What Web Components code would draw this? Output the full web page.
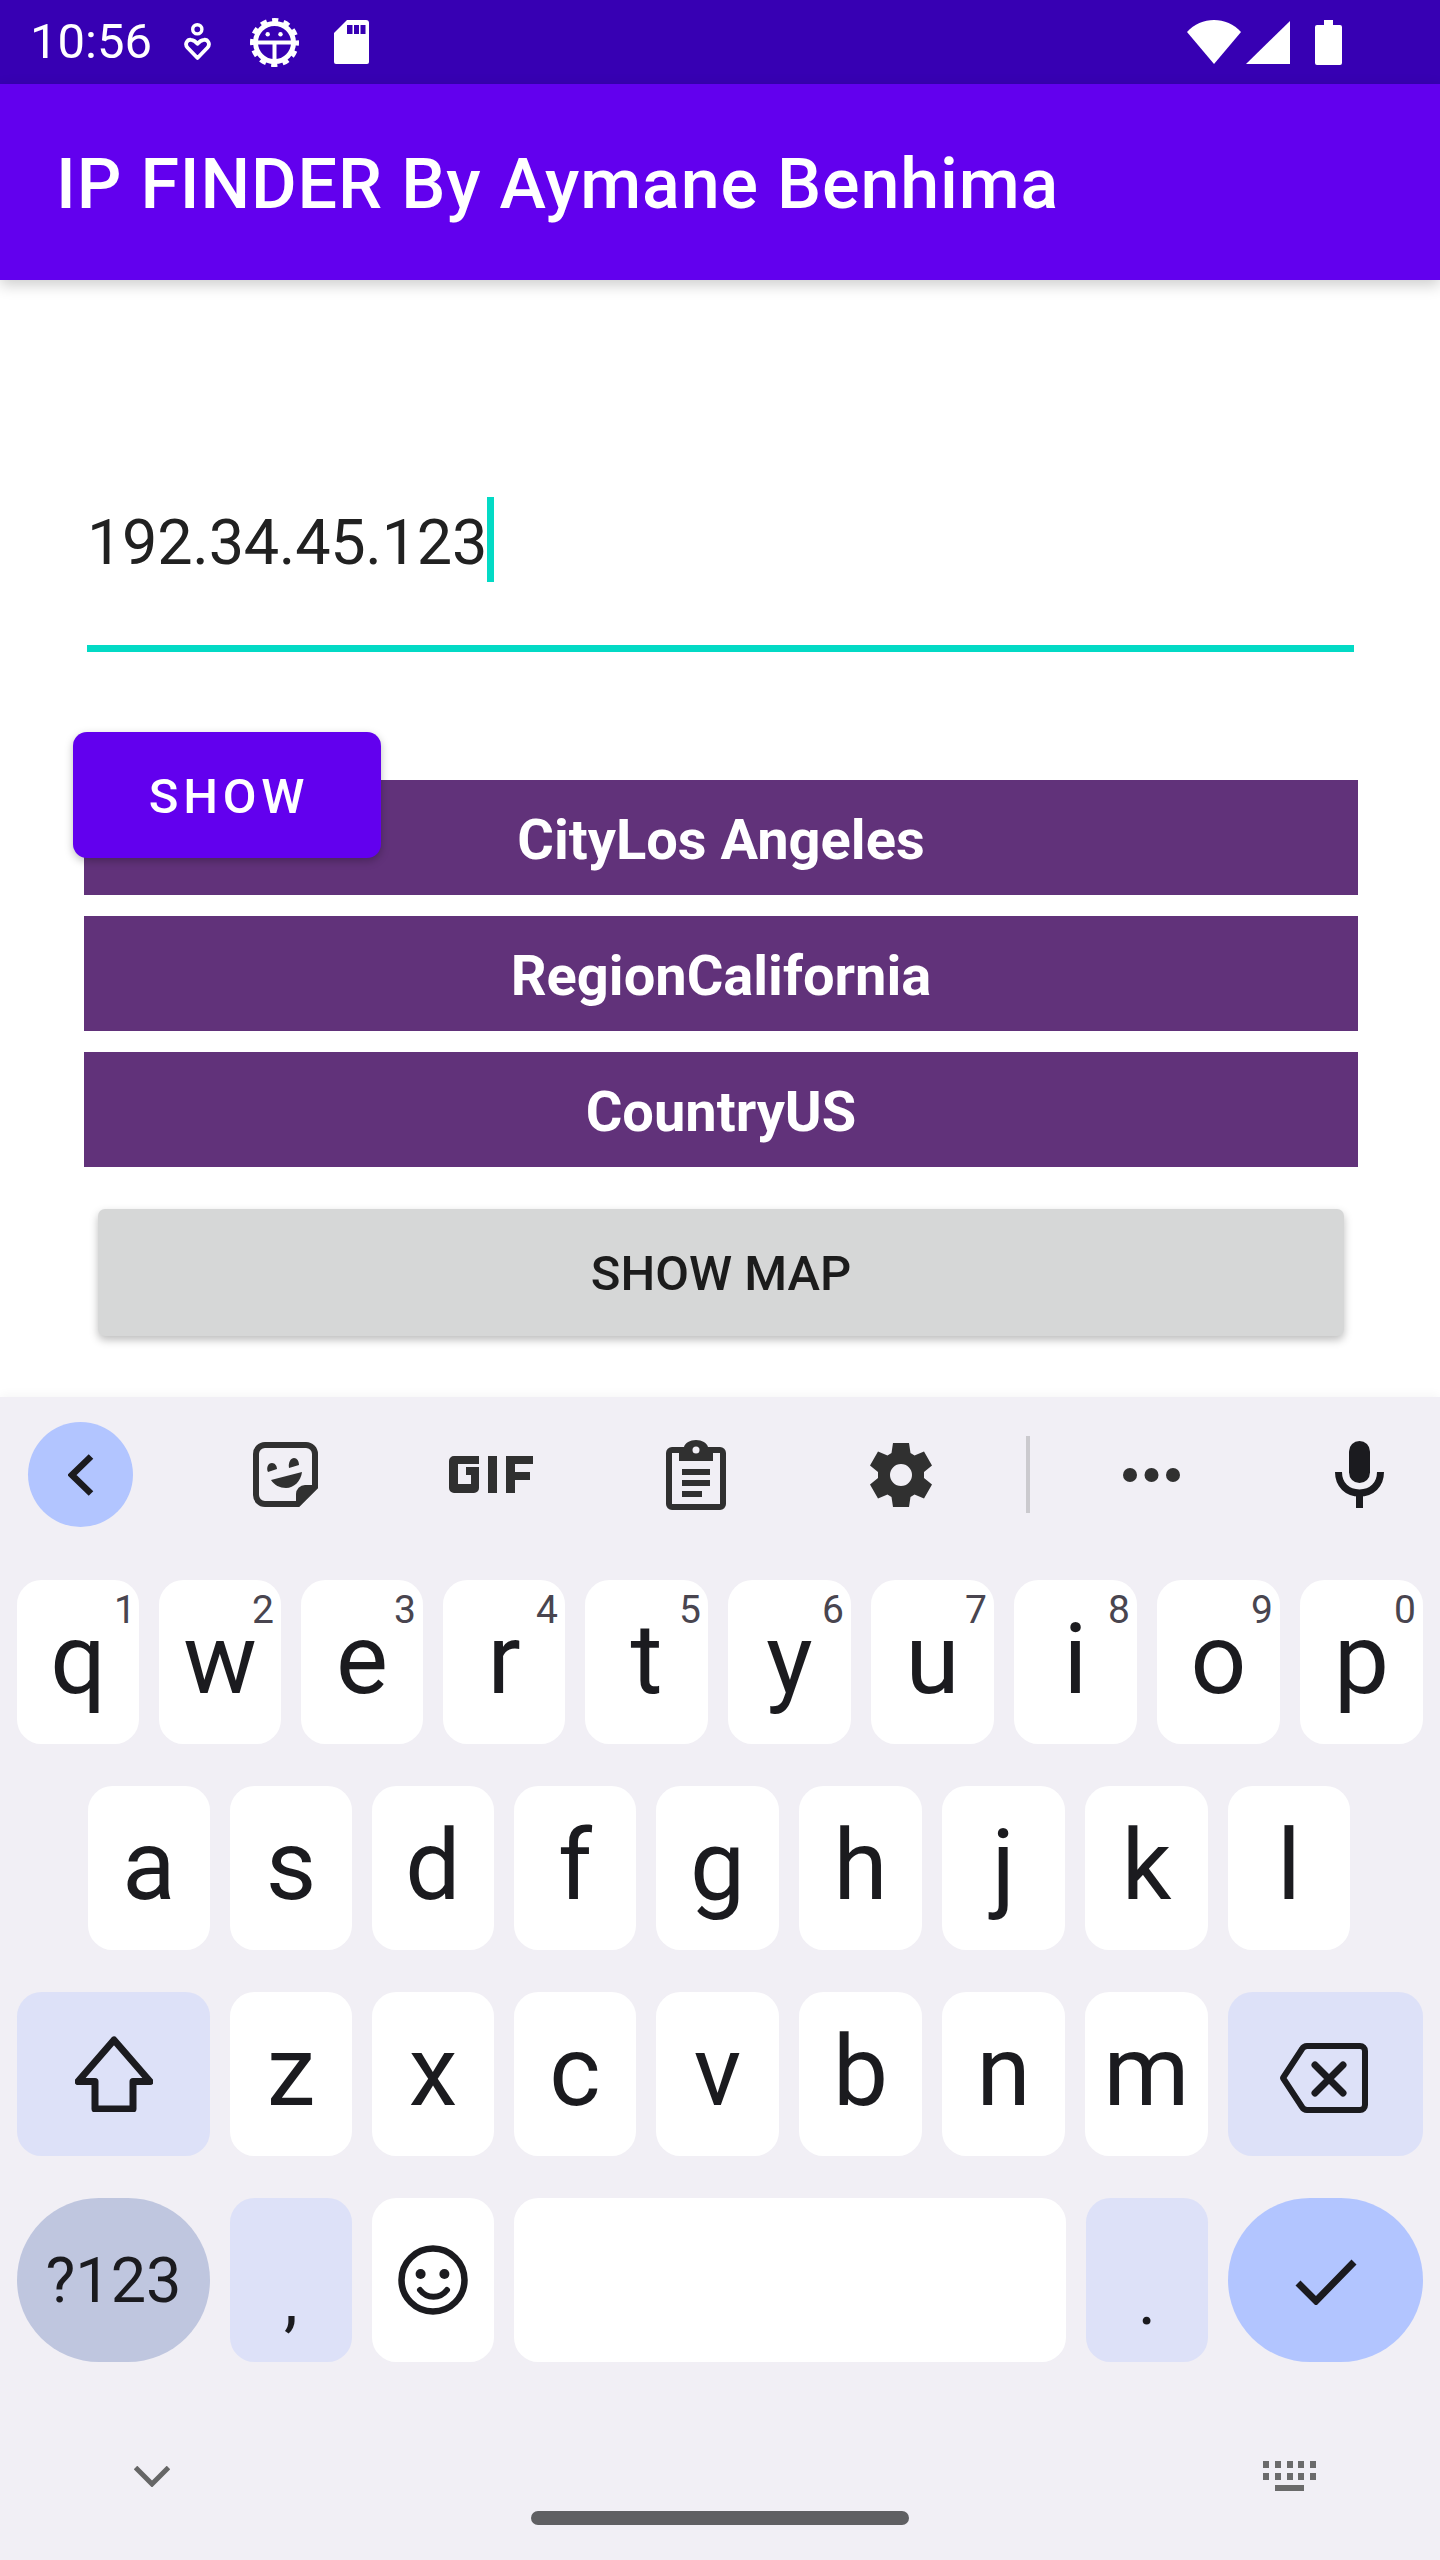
<!DOCTYPE html>
<html>
<head>
<meta charset="utf-8">
<title>IP FINDER</title>
<style>
  html, body { margin: 0; padding: 0; background: #fff; }
  body { width: 1440px; height: 2560px; overflow: hidden; font-family: Roboto, "Liberation Sans", sans-serif; display: flex; flex-direction: column; }
</style>
</head>
<body>
<status-bar time="10:56"></status-bar>
<app-bar>IP FINDER By Aymane Benhima</app-bar>
<finder-screen>
  <ip-field value="192.34.45.123"></ip-field>
  <show-button>SHOW</show-button>
  <info-row>CityLos Angeles</info-row>
  <info-row>RegionCalifornia</info-row>
  <info-row>CountryUS</info-row>
  <map-button>SHOW MAP</map-button>
</finder-screen>
<soft-keyboard></soft-keyboard>

<script>
class StatusBar extends HTMLElement {
  constructor() {
    super();
    this.attachShadow({ mode: "open" });
    this.shadowRoot.innerHTML = `
      <style>
        :host { display: flex; align-items: center; height: 84px; flex: none; background: #3700b3; color: #fff; padding: 0 98px 0 30px; box-sizing: border-box; }
        .time { font-size: 49px; line-height: 84px; width: 154px; }
        svg { display: block; fill: #fff; }
        .right { margin-left: auto; display: flex; align-items: center; }
      </style>
      <span class="time">${this.getAttribute("time")}</span>
      <svg width="27" height="38" viewBox="0 0 27 38" style="margin-right:39px"><g fill="none" stroke="#fff"><circle cx="13.300" cy="6.300" r="4.600" stroke-width="3.400"/><path d="M13.500 35 3.600 24.800c-3.500-4-.2-8.500 3.600-8 2.500.2 4.500 1.800 6.300 4 1.800-2.200 3.800-3.800 6.300-4 3.800-.5 7.100 4 3.600 8z" stroke-width="3.800" stroke-linejoin="round"/></g></svg>
      <svg width="49" height="49" viewBox="0 0 49 49" style="margin-right:35px"><g fill="none" stroke="#fff"><circle cx="24.500" cy="24.500" r="19" stroke-width="5"/><circle cx="24.500" cy="24.500" r="22" stroke-width="5" stroke-dasharray="6.200 5.320" stroke-dashoffset="3.100"/></g><path d="M7 22.500h35v4H26.500v16h-4v-16H7z"/><circle cx="17.700" cy="16.300" r="2.200"/><circle cx="30.500" cy="16.300" r="2.200"/></svg>
      <svg width="35" height="44" viewBox="0 0 35 44"><path d="M13 0h19a3 3 0 0 1 3 3v39a2 2 0 0 1-2 2H2a2 2 0 0 1-2-2V13z"/><path d="M13 5h5.500v9H13zM20 5h5v9h-5zM26.500 5h5v9h-5z" fill="#3700b3"/></svg>
      <div class="right">
        <svg width="54" height="44" viewBox="0 0 54 44"><path d="M0 12C7 4 17 0 27 0s20 4 27 12L27 44z"/></svg>
        <svg width="44" height="43" viewBox="0 0 44 43" style="margin-left:5px"><path d="M44 0v43H0z"/></svg>
        <svg width="27" height="45" viewBox="0 0 27 45" style="margin-left:25px"><path d="M9 0h9v5h7a2 2 0 0 1 2 2v36a2 2 0 0 1-2 2H2a2 2 0 0 1-2-2V7a2 2 0 0 1 2-2h7z"/></svg>
      </div>
    `;
  }
}

class AppBar extends HTMLElement {
  constructor() {
    super();
    this.attachShadow({ mode: "open" });
    this.shadowRoot.innerHTML = `
      <style>
        :host { display: flex; align-items: center; flex: none; position: relative; z-index: 2; height: 196px; padding: 4px 0 0 56px; box-sizing: border-box; background: #6200ee; color: #fff; font-size: 70px; font-weight: 500; letter-spacing: .85px; box-shadow: 0 5px 14px rgba(0,0,0,.2); }
      </style>
      <slot></slot>
    `;
  }
}

class FinderScreen extends HTMLElement {
  constructor() {
    super();
    this.attachShadow({ mode: "open" });
    this.shadowRoot.innerHTML = `
      <style>
        :host { display: flex; flex-direction: column; flex: none; height: 1117px; box-sizing: border-box; padding: 217px 82px 0 84px; background: #fff; }
      </style>
      <slot></slot>
    `;
  }
}

class IpField extends HTMLElement {
  constructor() {
    super();
    this.attachShadow({ mode: "open" });
    this.shadowRoot.innerHTML = `
      <style>
        :host { display: block; margin: 0 4px 0 3px; height: 155px; box-sizing: border-box; border-bottom: 7px solid #03dac5; color: #212121; font-size: 63px; }
        .line { display: flex; align-items: flex-start; height: 85px; }
        .text { line-height: 85px; padding-top: 3px; letter-spacing: -.3px; }
        .caret { width: 7px; height: 85px; background: #03dac5; }
      </style>
      <div class="line"><span class="text">${this.getAttribute("value")}</span><span class="caret"></span></div>
    `;
  }
}

class ShowButton extends HTMLElement {
  constructor() {
    super();
    this.attachShadow({ mode: "open" });
    this.shadowRoot.innerHTML = `
      <style>
        :host { display: flex; align-items: center; justify-content: center; position: relative; z-index: 1; width: 308px; height: 126px; box-sizing: border-box; padding: 2px 0 0 4px; margin: 80px 0 -78px -11px; border-radius: 14px; background: #6200ee; color: #fff; font-size: 49px; font-weight: 500; letter-spacing: 4.800px; box-shadow: 0 3px 9px rgba(0,0,0,.26); }
      </style>
      <slot></slot>
    `;
  }
}

class InfoRow extends HTMLElement {
  constructor() {
    super();
    this.attachShadow({ mode: "open" });
    this.shadowRoot.innerHTML = `
      <style>
        :host { display: flex; align-items: center; justify-content: center; height: 115px; box-sizing: border-box; padding-top: 5px; margin-bottom: 21px; background: #61327a; color: #fff; font-size: 56px; font-weight: 700; }
      </style>
      <slot></slot>
    `;
  }
}

class MapButton extends HTMLElement {
  constructor() {
    super();
    this.attachShadow({ mode: "open" });
    this.shadowRoot.innerHTML = `
      <style>
        :host { display: flex; align-items: center; justify-content: center; height: 127px; box-sizing: border-box; padding-top: 2px; margin: 21px 14px 0 14px; background: #d6d7d7; color: #1c1c1c; font-size: 49px; font-weight: 500; border-radius: 7px; box-shadow: 0 4px 9px rgba(0,0,0,.26); }
      </style>
      <slot></slot>
    `;
  }
}

const ICONS = {
  back: `<svg width="26" height="42" viewBox="0 0 26 42"><path d="M23 2.500 4 21l19 18.500" fill="none" stroke="#1b1b1f" stroke-width="6.500"/></svg>`,
  sticker: `<svg width="65" height="65" viewBox="0 0 65 65"><path d="M12 3h41a9 9 0 0 1 9 9v33L45 62H12a9 9 0 0 1-9-9V12a9 9 0 0 1 9-9z" fill="none" stroke="#303030" stroke-width="6"/><path d="M43 64V52a9 9 0 0 1 9-9h13z" fill="#303030"/><path d="M15 30c-2-4 0-9 4-9 3 0 5 3 5 6zM36 26c-1-6 2-10 5-10s5 3 5 7zM18 38l31-8c-1 9-8 16-16 16-6 0-12-3-15-8z" fill="#303030"/></svg>`,
  gif: `<svg width="84" height="37" viewBox="0 0 84 37"><path d="M5 0h25v8H9v20h13v-9h-5v-8h13v21a5 5 0 0 1-5 5H5a5 5 0 0 1-5-5V5a5 5 0 0 1 5-5zM39 0h9v37h-9zM57 0h27v8H66v8h15v8H66v13h-9z" fill="#303030"/></svg>`,
  clip: `<svg width="60" height="70" viewBox="0 0 60 70"><path d="M6 7h12c1-4 6-7 12-7s11 3 12 7h12a6 6 0 0 1 6 6v51a6 6 0 0 1-6 6H6a6 6 0 0 1-6-6V13a6 6 0 0 1 6-6zM6 13v51h48V13h-7v8H13v-8z" fill="#303030" fill-rule="evenodd"/><circle cx="30" cy="10" r="3.500" fill="#f1eff5"/><path d="M16 29h28v6H16zM16 40h28v6H16zM16 51h20v6H16z" fill="#303030"/></svg>`,
  gear: `<svg width="62" height="64" viewBox="0 0 62 64"><path fill="#303030" fill-rule="evenodd" d="M23 0h16l1.500 10 4 2.500L54 8.500l8 14-8 6.500v6l8 6.500-8 14-9.500-4-4 2.500L39 64H23l-1.500-10-4-2.500-9.500 4-8-14L8 35v-6l-8-6.500 8-14 9.500 4 4-2.500zM31 21a11 11 0 1 0 0 22 11 11 0 0 0 0-22z"/></svg>`,
  dots: `<svg width="57" height="14" viewBox="0 0 57 14" fill="#303030"><circle cx="7" cy="7" r="7"/><circle cx="28.500" cy="7" r="7"/><circle cx="50" cy="7" r="7"/></svg>`,
  mic: `<svg width="49" height="67" viewBox="0 0 49 67"><rect x="14" y="0" width="21" height="42" rx="10.500" fill="#1b1b1f"/><path d="M3.500 31c0 13 9 21 21 21s21-8 21-21" fill="none" stroke="#1b1b1f" stroke-width="7"/><path d="M21 50h7v17h-7z" fill="#1b1b1f"/></svg>`,
  shift: `<svg width="78" height="76" viewBox="0 0 78 76"><path d="M39 4 3 45.500h17V73h38V45.500h17z" fill="none" stroke="#1b1b1f" stroke-width="7" stroke-linejoin="round"/></svg>`,
  del: `<svg width="89" height="70" viewBox="0 0 89 70" style="margin:7px 4px 0 0"><path d="M28 3h53a5 5 0 0 1 5 5v54a5 5 0 0 1-5 5H28a6 6 0 0 1-5-3L4 35 23 6a6 6 0 0 1 5-3z" fill="none" stroke="#1b1b1f" stroke-width="6" stroke-linejoin="round"/><path d="M36 22l28 28M64 22 36 50" stroke="#1b1b1f" stroke-width="7" stroke-linecap="round"/></svg>`,
  smile: `<svg width="70" height="70" viewBox="0 0 70 70"><circle cx="35" cy="35" r="31.500" fill="none" stroke="#1b1b1f" stroke-width="6.500"/><circle cx="22.600" cy="29" r="5" fill="#1b1b1f"/><circle cx="46.400" cy="29" r="5" fill="#1b1b1f"/><path d="M22 45c7 9 20 9 27 0" fill="none" stroke="#1b1b1f" stroke-width="6" stroke-linecap="round"/></svg>`,
  check: `<svg width="62" height="46" viewBox="0 0 62 46" style="margin-top:3px"><path d="M3 24l18 18L59 3" fill="none" stroke="#1b1b1f" stroke-width="7"/></svg>`,
  hide: `<svg width="36" height="21" viewBox="0 0 36 21"><path d="M1.500 1.500 18 18 34.500 1.500" fill="none" stroke="#666" stroke-width="5"/></svg>`,
  switcher: `<svg width="53" height="30" viewBox="0 0 53 30" fill="#6b6b6b" style="margin-top:-5px"><path d="M0 0h6v7H0zM12 0h6v7h-6zM24 0h6v7h-6zM35 0h6v7h-6zM47 0h6v7h-6zM0 12h6v7H0zM12 12h6v7h-6zM24 12h6v7h-6zM35 12h6v7h-6zM47 12h6v7h-6zM12 24h29v6H12z"/></svg>`
};

class KeyCap extends HTMLElement {
  constructor() {
    super();
    this.attachShadow({ mode: "open" });
    const hint = this.getAttribute("hint");
    const icon = this.getAttribute("icon");
    this.shadowRoot.innerHTML = `
      <style>
        :host { display: flex; align-items: center; justify-content: center; position: relative; height: 100%; min-width: 0; box-sizing: border-box; border-radius: 24.500px; background: #fff; color: #1b1b1f; font-size: 98px; line-height: 1; }
        :host([letter]) { padding-bottom: 5px; }
        :host([tone="fn"]) { background: #dde1f8; }
        :host([tone="sym"]) { background: #bfc6df; border-radius: 82px; font-size: 63px; }
        :host([tone="go"]) { background: #b2c5ff; border-radius: 82px; }
        :host([tone="fn"][small]) { font-size: 70px; align-items: flex-end; padding-bottom: 27px; }
        .hint { position: absolute; top: 7px; right: 7px; font-size: 39px; line-height: 46px; color: #49454f; }
        :host([hint="1"]) .hint { right: 3px; }
        svg { display: block; }
      </style>
      <slot></slot>${icon ? ICONS[icon] : ""}${hint ? `<span class="hint">${hint}</span>` : ""}
    `;
  }
}

class KeyRow extends HTMLElement {
  constructor() {
    super();
    this.attachShadow({ mode: "open" });
    this.shadowRoot.innerHTML = `
      <style>
        :host { display: grid; grid-template-columns: var(--cols); column-gap: 20px; height: 164px; box-sizing: border-box; padding-left: var(--start, 17px); }
      </style>
      <slot></slot>
    `;
  }
}

class SoftKeyboard extends HTMLElement {
  constructor() {
    super();
    this.attachShadow({ mode: "open" });
    const keys = (s, hints) => s.split("").map((c, i) => `<key-cap letter${hints ? ` hint="${hints[i]}"` : ""}>${c}</key-cap>`).join("");
    this.shadowRoot.innerHTML = `
      <style>
        :host { display: block; flex: 1; background: #f1eff5; box-shadow: 0 -3px 9px rgba(0,0,0,.035); position: relative; }
        .tools { display: flex; align-items: center; height: 105px; padding: 25px 0 0 28px; }
        .slot { width: 105px; height: 105px; display: flex; align-items: center; justify-content: center; flex: none; margin-right: 100px; }
        .slot.back { background: #b2c5ff; border-radius: 50%; }
        .divider { width: 4px; height: 77px; background: #cbcace; flex: none; margin-left: -27px; margin-right: 69px; }
        .rows { display: flex; flex-direction: column; margin-top: 53px; row-gap: 42px; }
        .bottom { display: flex; justify-content: space-between; height: 21px; padding: 104px 124px 0 134px; align-items: flex-start; }
        .pill { width: 378px; height: 14px; border-radius: 7px; background: #5f5f62; margin: 24px auto 0; }
      </style>
      <div class="tools">
        <div class="slot back">${ICONS.back}</div>
        <div class="slot">${ICONS.sticker}</div>
        <div class="slot">${ICONS.gif}</div>
        <div class="slot">${ICONS.clip}</div>
        <div class="slot">${ICONS.gear}</div>
        <div class="divider"></div>
        <div class="slot" style="margin-right:103px">${ICONS.dots}</div>
        <div class="slot" style="margin:0">${ICONS.mic}</div>
      </div>
      <div class="rows">
        <key-row style="--cols:122px 122px 122px 122px repeat(6,123px)">${keys("qwertyuiop", "1234567890")}</key-row>
        <key-row style="--start:88px;--cols:122px 122px 122px 122px 123px 123px 123px 123px 122px">${keys("asdfghjkl")}</key-row>
        <key-row style="--cols:193px 122px 122px 122px 123px 123px 123px 123px 195px"><key-cap tone="fn" icon="shift"></key-cap>${keys("zxcvbnm")}<key-cap tone="fn" icon="del"></key-cap></key-row>
        <key-row style="--cols:193px 122px 122px 552px 122px 195px"><key-cap tone="sym">?123</key-cap><key-cap tone="fn" small>,</key-cap><key-cap icon="smile"></key-cap><key-cap></key-cap><key-cap tone="fn" small>.</key-cap><key-cap tone="go" icon="check"></key-cap></key-row>
      </div>
      <div class="bottom">${ICONS.hide}${ICONS.switcher}</div>
      <div class="pill"></div>
    `;
  }
}

customElements.define("status-bar", StatusBar);
customElements.define("app-bar", AppBar);
customElements.define("finder-screen", FinderScreen);
customElements.define("ip-field", IpField);
customElements.define("show-button", ShowButton);
customElements.define("info-row", InfoRow);
customElements.define("map-button", MapButton);
customElements.define("key-cap", KeyCap);
customElements.define("key-row", KeyRow);
customElements.define("soft-keyboard", SoftKeyboard);
</script>
</body>
</html>
